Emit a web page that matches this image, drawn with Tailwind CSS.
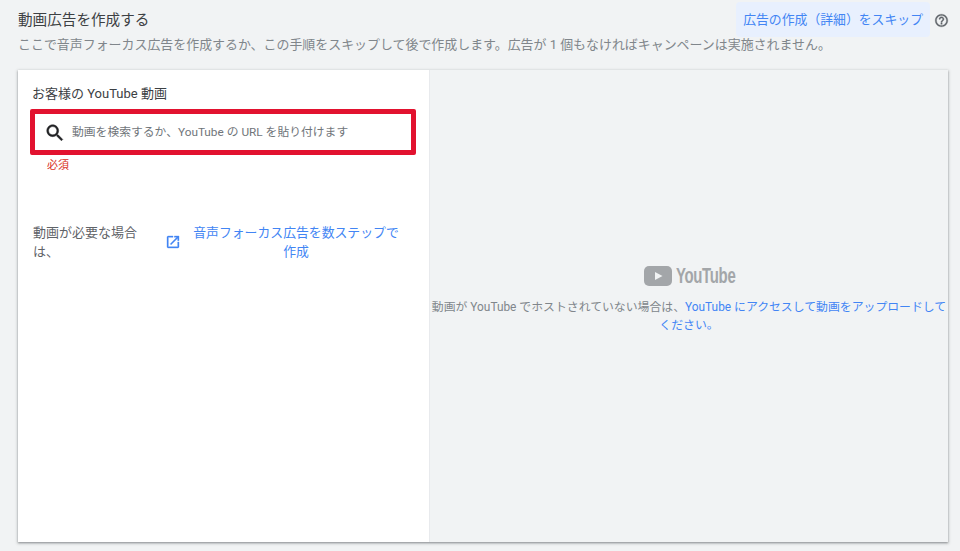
<!DOCTYPE html>
<html lang="ja">
<head>
<meta charset="UTF-8" />
<title>動画広告を作成する</title>
<script src="https://cdn.jsdelivr.net/npm/@tailwindcss/browser@4"></script>
</head>
<body class="bg-[#f1f3f4] w-[960px] h-[551px] overflow-hidden font-['Roboto','Noto_Sans_CJK_JP',sans-serif]">
  <div class="pl-[18px] pr-[11px] pt-[3px]">
    <!-- Header -->
    <div class="flex items-start justify-between">
      <h1 class="text-[14.6px] leading-[34px] font-normal text-[#3c4043]">動画広告を作成する</h1>
      <div class="flex items-center gap-[4px] -mt-[1px]">
        <a class="h-[35px] px-[7px] rounded-[4px] bg-[#e8f0fe] text-[#4285f4] text-[12.85px] leading-[35px] whitespace-nowrap">広告の作成（詳細）をスキップ</a>
        <svg class="w-[15px] h-[15px] mt-[2px]" viewBox="0 0 24 24" fill="#5f6368" stroke="#5f6368" stroke-width="0.6"><path d="M11 18h2v-2h-2v2zm1-16C6.48 2 2 6.48 2 12s4.480 10 10 10 10-4.480 10-10S17.520 2 12 2zm0 18c-4.410 0-8-3.590-8-8s3.590-8 8-8 8 3.590 8 8-3.590 8-8 8zm0-14c-2.210 0-4 1.790-4 4h2c0-1.100.9-2 2-2s2 .9 2 2c0 2-3 1.750-3 5h2c0-2.250 3-2.500 3-5 0-2.210-1.790-4-4-4z"/></svg>
      </div>
    </div>
    <p class="text-[12.95px] leading-[18px] text-[#80868b] -mt-[1px] whitespace-nowrap">ここで音声フォーカス広告を作成するか、この手順をスキップして後で作成します。広告が 1 個もなければキャンペーンは実施されません。</p>

    <!-- Card -->
    <div class="mt-[16px] w-[930px] h-[472px] flex shadow-[0_1px_2px_rgba(60,64,67,0.5),0_1px_3px_1px_rgba(60,64,67,0.12)]">
      <div class="w-[412px] bg-white border-r border-[#e8eaed] pl-[14px] pr-[14px] pt-[16px]">
        <h2 class="text-[13px] leading-[16px] font-normal text-[#3c4043]">お客様の YouTube 動画</h2>
        <div class="mt-[7px] w-[386px] h-[46px] border-[5px] border-[#e2122f] rounded-[2px] flex items-center pl-[9px] -ml-[2px]">
          <svg class="w-[22px] h-[22px] mt-[1px] text-[#202124] shrink-0" viewBox="0 0 24 24" fill="currentColor" stroke="currentColor" stroke-width="0.5"><path d="M15.500 14h-.79l-.28-.27C15.410 12.590 16 11.110 16 9.500 16 5.910 13.090 3 9.500 3S3 5.910 3 9.500 5.910 16 9.500 16c1.610 0 3.090-.59 4.230-1.570l.27.28v.79l5 4.990L20.490 19l-4.990-5zm-6 0C7.010 14 5 11.990 5 9.500S7.010 5 9.500 5 14 7.010 14 9.500 11.990 14 9.500 14z"/></svg>
          <span class="ml-[6px] mt-[2px] text-[11.8px] text-[#70757a] whitespace-nowrap">動画を検索するか、YouTube の URL を貼り付けます</span>
        </div>
        <p class="mt-[4px] ml-[15px] text-[11px] leading-[14px] text-[#d93025]">必須</p>

        <div class="mt-[50px] flex items-center">
          <p class="w-[117px] ml-px text-[13px] leading-[19px] text-[#5f6368]">動画が必要な場合は、</p>
          <svg class="w-[16px] h-[16px] ml-[15px] shrink-0 text-[#4285f4]" viewBox="0 0 24 24" fill="currentColor" stroke="currentColor" stroke-width="0.5"><path d="M19 19H5V5h7V3H5a2 2 0 0 0-2 2v14a2 2 0 0 0 2 2h14c1.100 0 2-.9 2-2v-7h-2v7zM14 3v2h3.590l-9.830 9.830 1.410 1.410L19 6.410V10h2V3h-7z"/></svg>
          <a class="ml-[10px] w-[210px] text-center text-[12.85px] leading-[19px] text-[#4285f4]">音声フォーカス広告を数ステップで作成</a>
        </div>
      </div>

      <div class="flex-1 flex flex-col items-center pt-[193px] min-w-0">
        <div class="flex items-center h-[26px] w-[91px]">
          <svg class="w-[28px] h-[20px] shrink-0" viewBox="0 0 28 20"><rect width="28" height="20" rx="5" fill="#a3a6a9"/><path d="M11 6l7.500 4-7.500 4z" fill="#f1f3f4"/></svg>
          <span class="ml-[4px] text-[22px] font-bold text-[#a3a6a9] leading-[26px] tracking-[-0.5px] font-['Liberation_Sans','Noto_Sans_CJK_JP',sans-serif] inline-block origin-left scale-x-[0.68] whitespace-nowrap">YouTube</span>
        </div>
        <p class="mt-[9px] w-[518px] text-center text-[11.87px] leading-[18px] text-[#80868b]">動画が YouTube でホストされていない場合は、<a class="text-[#4285f4]">YouTube にアクセスして動画をアップロードして<br />ください。</a></p>
      </div>
    </div>
  </div>
</body>
</html>
